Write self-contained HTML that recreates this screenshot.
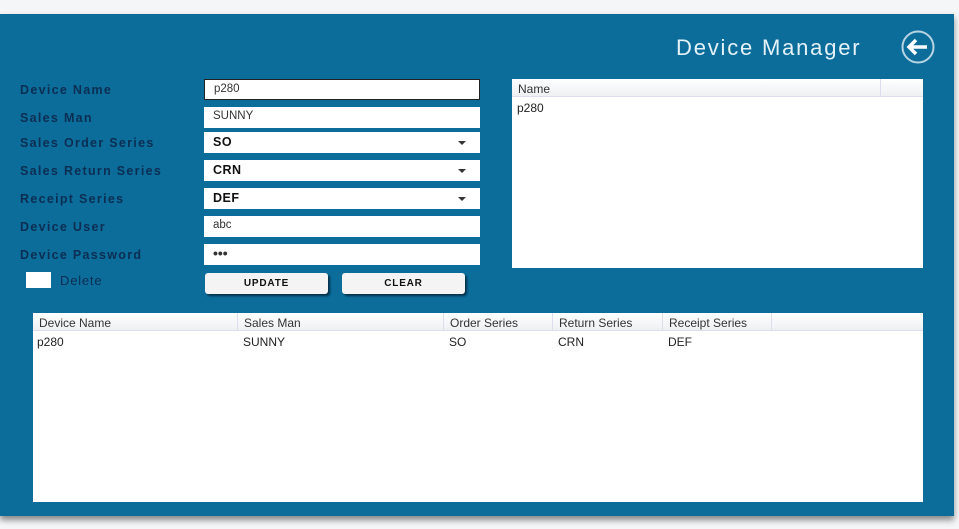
<!DOCTYPE html>
<html><head><meta charset="utf-8"><style>
*{margin:0;padding:0;box-sizing:border-box}
body{width:959px;height:529px;background:#f4f6f7;position:relative;overflow:hidden;font-family:"Liberation Sans",sans-serif}
#panel{position:absolute;left:0;top:14px;width:954px;height:502px;background:#0c6d9b;box-shadow:0 4px 6px rgba(0,0,0,.45)}
.lbl{position:absolute;left:20px;font-size:12.5px;font-weight:bold;color:#0b2e52;letter-spacing:1.3px;white-space:nowrap;width:156px;overflow:hidden}
.in{position:absolute;left:204px;width:276px;height:21px;background:#fff;font-size:11.5px;color:#333;padding:3px 0 0 9px}
.dd{font-weight:bold;font-size:12.5px;color:#111;letter-spacing:.5px}
.dd:after{content:"";position:absolute;right:14px;top:9px;border-left:4px solid transparent;border-right:4px solid transparent;border-top:4px solid #333}
.btn{position:absolute;top:273px;width:123px;height:21px;background:#f4f4f4;border-radius:3px;box-shadow:2px 2px 2px #05304a;font-size:10px;font-weight:bold;text-align:center;line-height:22px;color:#111;letter-spacing:.8px}
.grid{position:absolute;background:#fff}
.hd{height:18px;background:linear-gradient(#fff,#eef0f2);border-bottom:1px solid #dde;font-size:12px;color:#333;position:relative}
.hd span,.row span{position:absolute;top:4px}
.hd span{border-right:1px solid #dde;height:18px;top:0;padding:3px 0 0 6px;white-space:nowrap;overflow:hidden}
.row{position:relative;height:20px;font-size:12px;color:#222}
</style></head><body>
<div id="panel"></div>
<div style="position:absolute;left:676px;top:35px;font-size:22px;letter-spacing:1.8px;color:#e4f2f8">Device Manager</div>
<svg style="position:absolute;left:900px;top:29px" width="36" height="36"><circle cx="18" cy="18" r="15.5" fill="none" stroke="#b8d4e2" stroke-width="2"/><path d="M9 18H27M16 11L9 18L16 25" fill="none" stroke="#fff" stroke-width="3.5"/></svg>
<div class="lbl" style="top:83px">Device Name</div>
<div class="lbl" style="top:111px">Sales Man</div>
<div class="lbl" style="top:136px">Sales Order Series</div>
<div class="lbl" style="top:164px">Sales Return Series</div>
<div class="lbl" style="top:192px">Receipt Series</div>
<div class="lbl" style="top:220px">Device User</div>
<div class="lbl" style="top:248px">Device Password</div>
<div style="position:absolute;left:26px;top:272px;width:25px;height:16px;background:#fff"></div>
<div class="lbl" style="left:60px;top:273px;font-weight:normal;font-size:13px;color:#0b2e52;letter-spacing:.8px">Delete</div>
<div class="in" style="top:79px;border:1px solid #222">p280</div>
<div class="in" style="top:107px">SUNNY</div>
<div class="in dd" style="top:132px">SO</div>
<div class="in dd" style="top:160px">CRN</div>
<div class="in dd" style="top:188px">DEF</div>
<div class="in" style="top:216px">abc</div>
<div class="in" style="top:244px;font-size:14px;font-weight:bold;padding-top:1px">•••</div>
<div class="btn" style="left:205px">UPDATE</div>
<div class="btn" style="left:342px">CLEAR</div>
<div class="grid" style="left:512px;top:79px;width:411px;height:189px">
<div class="hd"><span style="left:0;width:369px">Name</span></div>
<div class="row"><span style="left:5px">p280</span></div>
</div>
<div class="grid" style="left:33px;top:313px;width:890px;height:189px">
<div class="hd"><span style="left:0;width:205px">Device Name</span><span style="left:205px;width:206px">Sales Man</span><span style="left:411px;width:109px">Order Series</span><span style="left:520px;width:110px">Return Series</span><span style="left:630px;width:109px">Receipt Series</span></div>
<div class="row"><span style="left:4px">p280</span><span style="left:210px">SUNNY</span><span style="left:416px">SO</span><span style="left:525px">CRN</span><span style="left:635px">DEF</span></div>
</div>
</body></html>
